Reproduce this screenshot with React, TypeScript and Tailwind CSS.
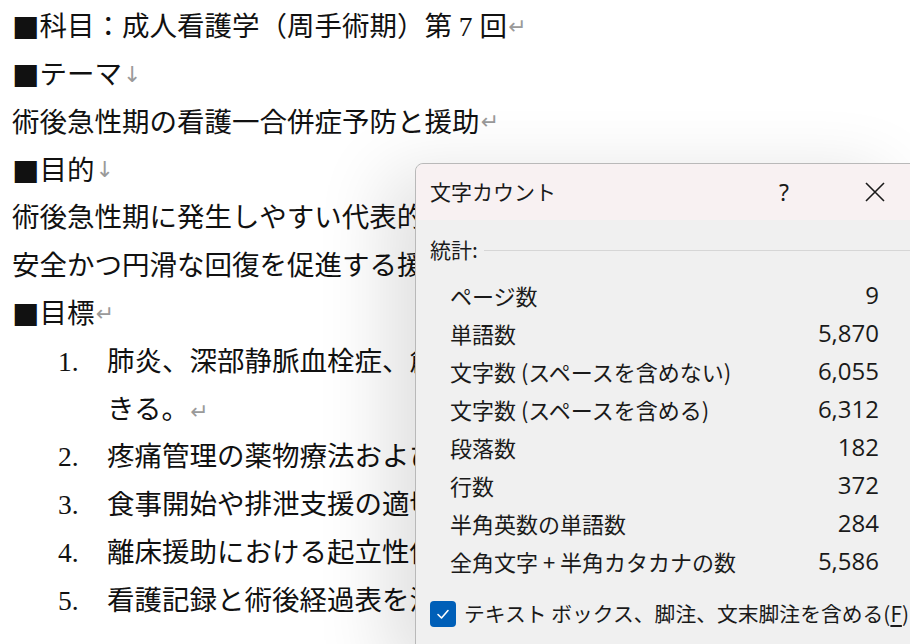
import React from "react";

const docFont = { fontFamily: '"Liberation Serif", "Noto Sans CJK JP", serif' };
const cjk = { fontFamily: '"Noto Sans CJK JP", sans-serif' };
const uiFont = { fontFamily: '"Noto Sans CJK JP", "Noto Sans", sans-serif' };

function Mark({ c = "↵" }: { c?: string }) {
  return (
    <span className="text-[22px] leading-none text-[#9a9a9a] ml-[1px]" style={{ fontFamily: '"DejaVu Sans", sans-serif' }}>
      {c}
    </span>
  );
}

function Sq() {
  return <span style={cjk}>■</span>;
}

const stats: [string, string][] = [
  ["ページ数", "9"],
  ["単語数", "5,870"],
  ["文字数 (スペースを含めない)", "6,055"],
  ["文字数 (スペースを含める)", "6,312"],
  ["段落数", "182"],
  ["行数", "372"],
  ["半角英数の単語数", "284"],
  ["全角文字 + 半角カタカナの数", "5,586"],
];

function Line({ children }: { children: React.ReactNode }) {
  return <div className="h-[47.8px] flex items-center whitespace-nowrap">{children}</div>;
}

export default function App() {
  return (
    <div className="relative w-[910px] h-[644px] overflow-hidden bg-white">
      <div className="pl-[12px] pt-[3px] text-[27.5px] leading-none text-[#111]" style={docFont}>
        <Line><Sq />科目：成人看護学（周手術期）第 7 回<Mark /></Line>
        <Line><Sq />テーマ<Mark c="↓" /></Line>
        <Line>術後急性期の看護一合併症予防と援助<Mark /></Line>
        <Line><Sq />目的<Mark c="↓" /></Line>
        <Line>術後急性期に発生しやすい代表的な合併症を理解し、</Line>
        <Line>安全かつ円滑な回復を促進する援助を学ぶ。</Line>
        <Line><Sq />目標<Mark /></Line>
        <div className="pl-[46px]">
          {[
            ["1.", "肺炎、深部静脈血栓症、創感染の予防について説明で"],
            ["", "きる。"],
            ["2.", "疼痛管理の薬物療法および非薬物療法"],
            ["3.", "食事開始や排泄支援の適切な時期"],
            ["4.", "離床援助における起立性低血圧"],
            ["5.", "看護記録と術後経過表を活用する"],
          ].map(([n, t], i) => (
            <Line key={i}>
              <span className="w-[49px] shrink-0">{n}</span>
              <span>
                {t}
                {i === 1 && <Mark />}
              </span>
            </Line>
          ))}
        </div>
      </div>

      <div
        className="absolute left-[415px] top-[163px] w-[500px] h-[500px] rounded-tl-[8px] border border-[#b9b9b9] bg-[#f0f0f0] shadow-[-30px_10px_70px_rgba(0,0,0,0.12)] flex flex-col"
        style={uiFont}
      >
        <div className="h-[56px] flex items-center bg-[#f8f1f2] rounded-tl-[8px] pl-[14px] text-[#1a1a1a]">
          <span className="text-[21px]">文字カウント</span>
          <span className="ml-auto w-[40px] text-center text-[23px] mr-[60px]" style={{ fontFamily: '"Noto Sans", sans-serif' }}>?</span>
          <svg width="22" height="22" viewBox="0 0 22 22" className="mr-[28px] shrink-0">
            <path d="M2 2 L20 20 M20 2 L2 20" stroke="#1a1a1a" strokeWidth="1.6" fill="none" />
          </svg>
        </div>
        <div className="pl-[14px] pr-[35px] pt-[16px] text-[#1a1a1a]">
          <div className="flex items-center gap-[6px] h-[28px]">
            <span className="text-[21px]">統計:</span>
            <div className="flex-1 h-px bg-[#d6d6d6] -mr-[35px]" />
          </div>
          <div className="pl-[20px] mt-[12px]">
            {stats.map(([l, v]) => (
              <div key={l} className="flex items-center h-[38px] text-[22px]">
                <span>{l}</span>
                <span className="ml-auto text-[24px]" style={{ fontFamily: '"Open Sans", sans-serif' }}>{v}</span>
              </div>
            ))}
          </div>
          <div className="flex items-center mt-[18px] gap-[8px]">
            <div className="w-[26px] h-[26px] shrink-0 rounded-[4px] bg-[#005fb8] flex items-center justify-center">
              <svg width="16" height="16" viewBox="0 0 16 16">
                <path d="M3 8.5 L6.5 12 L13 4.5" stroke="white" strokeWidth="1.6" fill="none" strokeLinecap="round" strokeLinejoin="round" />
              </svg>
            </div>
            <span className="text-[20.8px] whitespace-nowrap">
              テキスト ボックス、脚注、文末脚注を含める(<span className="underline underline-offset-[3px]">F</span>)
            </span>
          </div>
        </div>
      </div>
    </div>
  );
}
